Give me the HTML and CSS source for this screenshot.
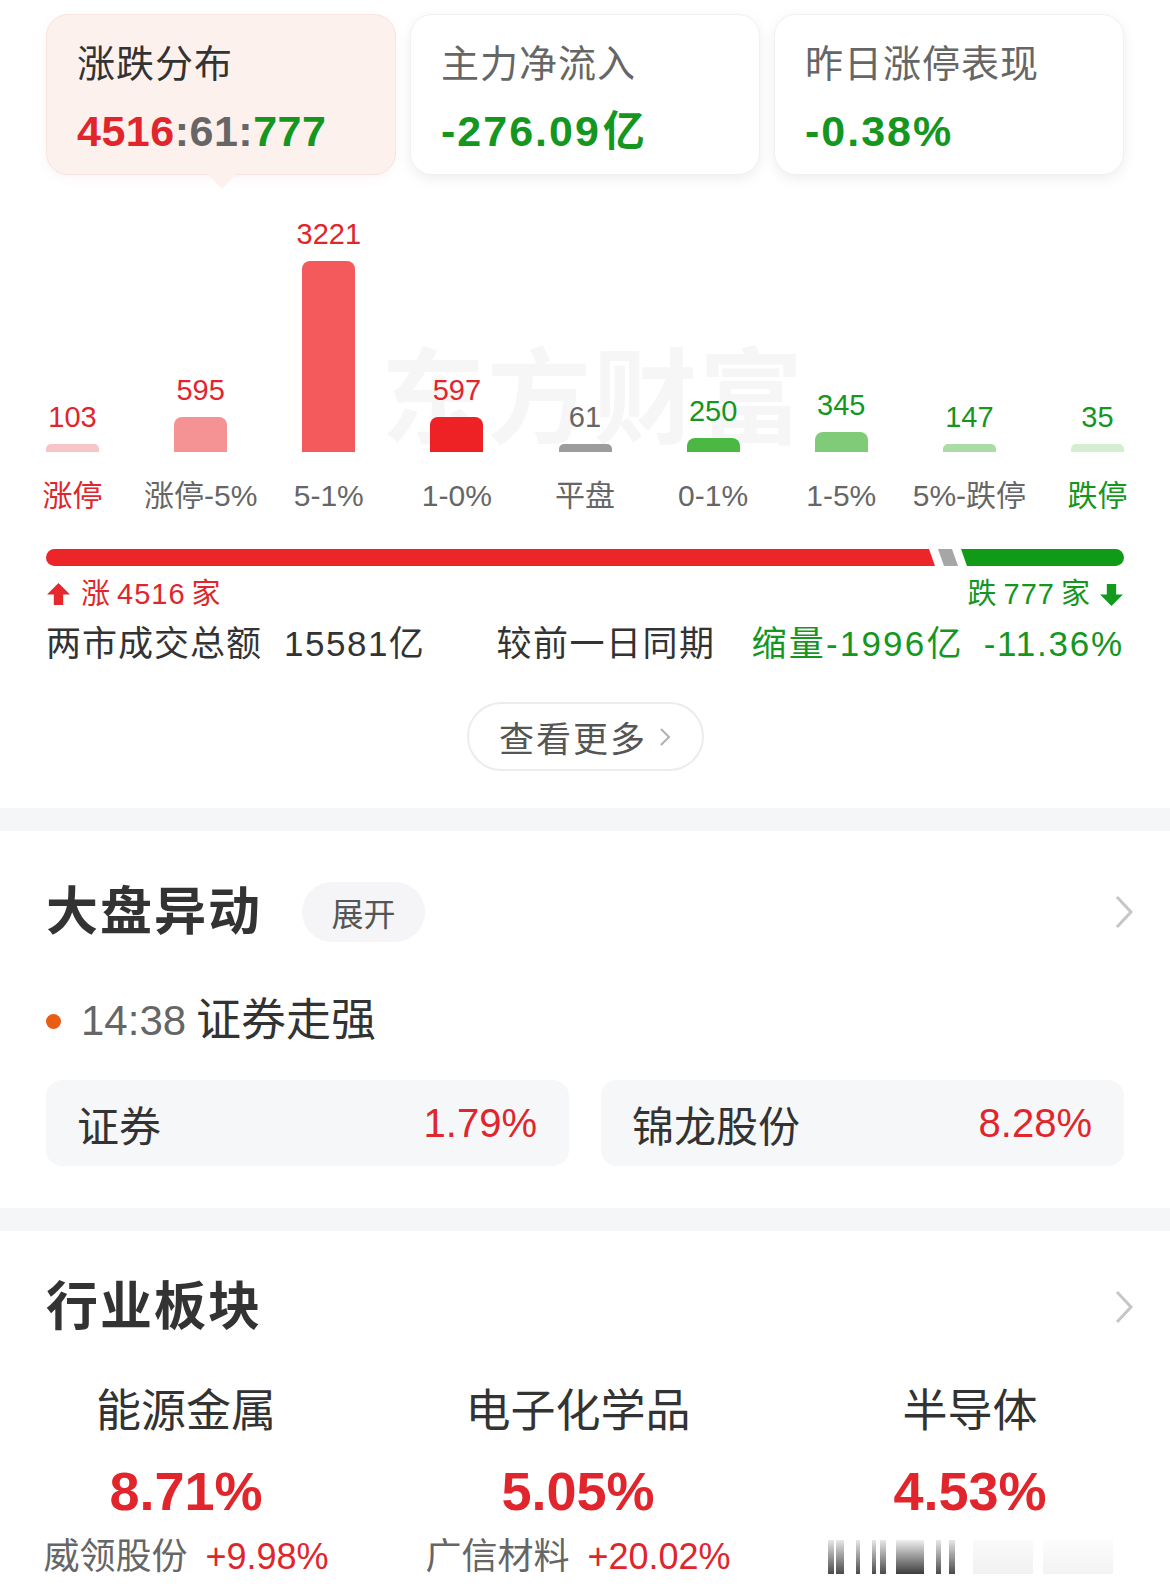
FILE: index.html
```html
<!DOCTYPE html>
<html lang="zh-CN">
<head>
<meta charset="utf-8">
<title>涨跌分布</title>
<link rel="stylesheet" href="styles.css">
</head>
<body>
<div class="page">
  <section class="top">
    <div class="cards">
      <div class="card active">
        <div class="card-title">涨跌分布</div>
        <div class="card-value"><span class="c-up">4516</span><span class="c-flat">:61:</span><span class="c-down">777</span></div>
        <span class="pointer"></span>
      </div>
      <div class="card">
        <div class="card-title muted">主力净流入</div>
        <div class="card-value wide c-down">-276.09<span class="unit">亿</span></div>
      </div>
      <div class="card">
        <div class="card-title muted">昨日涨停表现</div>
        <div class="card-value wide c-down">-0.38%</div>
      </div>
    </div>

    <div class="chart">
      <div class="watermark">东方财富</div>
      <div class="col"><div class="num c-up">103</div><div class="bar b1" style="height:8px"></div><div class="cat c-up">涨停</div></div>
      <div class="col"><div class="num c-up">595</div><div class="bar b2" style="height:35px"></div><div class="cat">涨停-5%</div></div>
      <div class="col"><div class="num c-up">3221</div><div class="bar b3" style="height:191px"></div><div class="cat">5-1%</div></div>
      <div class="col"><div class="num c-up">597</div><div class="bar b4" style="height:35px"></div><div class="cat">1-0%</div></div>
      <div class="col"><div class="num c-flat">61</div><div class="bar b5" style="height:8px"></div><div class="cat">平盘</div></div>
      <div class="col"><div class="num c-down">250</div><div class="bar b6" style="height:14px"></div><div class="cat">0-1%</div></div>
      <div class="col"><div class="num c-down">345</div><div class="bar b7" style="height:20px"></div><div class="cat">1-5%</div></div>
      <div class="col"><div class="num c-down">147</div><div class="bar b8" style="height:8px"></div><div class="cat">5%-跌停</div></div>
      <div class="col"><div class="num c-down">35</div><div class="bar b9" style="height:8px"></div><div class="cat c-down">跌停</div></div>
    </div>

    <div class="ratio">
      <div class="seg seg-up"></div>
      <div class="seg seg-flat"></div>
      <div class="seg seg-down"></div>
    </div>
    <div class="ratio-labels">
      <span class="rl c-up"><svg class="arr" viewBox="0 0 24 24" width="24" height="24"><path d="M12 1 L23 12 H16.5 V22 H7.5 V12 H1 Z" fill="#e6282d"/></svg>涨<span class="rn">4516</span>家</span>
      <span class="rl c-down">跌<span class="rn">777</span>家<svg class="arr" viewBox="0 0 24 24" width="24" height="24"><path d="M12 23 L23 12 H16.5 V2 H7.5 V12 H1 Z" fill="#129a1f"/></svg></span>
    </div>

    <div class="turnover">
      <span class="t-label">两市成交总额</span>
      <span class="t-val">15581亿</span>
      <span class="t-label t-cmp">较前一日同期</span>
      <span class="c-down t-chg">缩量-1996亿</span>
      <span class="c-down t-pct">-11.36%</span>
    </div>

    <div class="more-wrap">
      <div class="more">查看更多<svg viewBox="0 0 12 20" width="12" height="20"><path d="M2 2 L10 10 L2 18" fill="none" stroke="#b0b0b0" stroke-width="2"/></svg></div>
    </div>
  </section>

  <div class="divider"></div>

  <section class="sec">
    <div class="sec-head">
      <h2 class="sec-title">大盘异动</h2>
      <span class="pill">展开</span>
      <svg class="chev" viewBox="0 0 20 36" width="20" height="36"><path d="M3 3 L17 18 L3 33" fill="none" stroke="#c6c6c6" stroke-width="3"/></svg>
    </div>
    <div class="event">
      <span class="dot"></span>
      <span class="time">14:38</span>
      <span class="event-title">证券走强</span>
    </div>
    <div class="boxes">
      <div class="box"><span class="box-name">证券</span><span class="c-up">1.79%</span></div>
      <div class="box"><span class="box-name">锦龙股份</span><span class="c-up">8.28%</span></div>
    </div>
  </section>

  <div class="divider"></div>

  <section class="sec sec-ind">
    <div class="sec-head">
      <h2 class="sec-title">行业板块</h2>
      <svg class="chev" viewBox="0 0 20 36" width="20" height="36"><path d="M3 3 L17 18 L3 33" fill="none" stroke="#c6c6c6" stroke-width="3"/></svg>
    </div>
    <div class="industries">
      <div class="ind">
        <div class="ind-name">能源金属</div>
        <div class="ind-pct">8.71%</div>
        <div class="ind-lead">威领股份<span class="c-up">+9.98%</span></div>
      </div>
      <div class="ind">
        <div class="ind-name">电子化学品</div>
        <div class="ind-pct">5.05%</div>
        <div class="ind-lead">广信材料<span class="c-up">+20.02%</span></div>
      </div>
      <div class="ind">
        <div class="ind-name">半导体</div>
        <div class="ind-pct">4.53%</div>
        <div class="ind-lead glitch">
          <span class="g g1"></span><span class="g g2"></span><span class="g g3"></span><span class="g g4"></span><span class="g g5"></span><span class="g g6"></span><span class="g g7"></span><span class="g g8"></span><span class="g g9"></span><span class="g g10"></span>
        </div>
      </div>
    </div>
  </section>
</div>
</body>
</html>
```

FILE: styles.css
```css
* { box-sizing: border-box; }
html, body { margin: 0; padding: 0; background: #fff; }
body {
  font-family: "Liberation Sans", "Noto Sans CJK SC", sans-serif;
  color: #333;
}
.page { width: 1170px; overflow: hidden; }

.c-up { color: #e0262c; }
.c-down { color: #14961f; }
.c-flat { color: #666; }

.top { padding: 14px 46px 0; }

.cards { display: flex; gap: 14px; }
.card {
  position: relative;
  flex: 1;
  height: 161px;
  padding: 27px 30px 0;
  border-radius: 22px;
  background: #fff;
  border: 1px solid #f1f1f1;
  box-shadow: 0 4px 14px rgba(0,0,0,0.07);
}
.card.active { background: #fdf1ee; border-color: #f8e4e0; box-shadow: 0 3px 10px rgba(200,120,110,0.08); }
.card-title { font-size: 38px; line-height: 44px; color: #333; letter-spacing: 1px; }
.card-title.muted { color: #666; }
.card-value { margin-top: 19px; font-size: 43px; line-height: 52px; font-weight: bold; letter-spacing: 0.5px; }
.card-value.wide { letter-spacing: 2px; }
.card-value .unit { font-weight: bold; font-size: 42px; margin-left: 2px; }
.pointer {
  position: absolute;
  left: 161px;
  bottom: -15px;
  width: 0; height: 0;
  border-left: 14px solid transparent;
  border-right: 14px solid transparent;
  border-top: 15px solid #fdf1ee;
}

.chart {
  position: relative;
  margin-top: 42px;
  display: flex;
  justify-content: space-between;
  align-items: flex-end;
}
.watermark {
  position: absolute;
  left: 335px;
  top: 98px;
  font-size: 104px;
  font-weight: bold;
  letter-spacing: 2px;
  color: #f6f6f6;
  white-space: nowrap;
  font-family: "Noto Sans CJK SC", sans-serif;
  z-index: 0;
}
.col {
  position: relative;
  z-index: 1;
  width: 53px;
  display: flex;
  flex-direction: column;
  align-items: center;
}
.num { font-size: 29px; line-height: 34px; margin-bottom: 10px; white-space: nowrap; }
.bar { width: 53px; border-radius: 8px 8px 0 0; }
.b1 { background: #f9c4c5; border-radius: 5px 5px 0 0; }
.b2 { background: #f59394; }
.b3 { background: #f45a5b; }
.b4 { background: #ee2225; }
.b5 { background: #9c9c9c; border-radius: 5px 5px 0 0; }
.b6 { background: #4bb843; }
.b7 { background: #7fcb77; }
.b8 { background: #acdca6; border-radius: 5px 5px 0 0; }
.b9 { background: #d5eed2; border-radius: 5px 5px 0 0; }
.cat { margin-top: 24px; font-size: 30px; line-height: 40px; color: #666; white-space: nowrap; }
.cat.c-up { color: #e0262c; }
.cat.c-down { color: #14961f; }

.ratio { margin-top: 33px; display: flex; gap: 3px; height: 17px; }
.seg { height: 17px; }
.seg-up {
  width: 889px;
  background: #ec2528;
  border-radius: 9px 0 0 9px;
  clip-path: polygon(0 0, calc(100% - 6px) 0, 100% 100%, 0 100%);
}
.seg-flat {
  width: 20px;
  background: #a6a6a6;
  clip-path: polygon(0 0, calc(100% - 6px) 0, 100% 100%, 6px 100%);
}
.seg-down {
  flex: 1;
  background: #0f9a18;
  border-radius: 0 9px 9px 0;
  clip-path: polygon(0 0, 100% 0, 100% 100%, 6px 100%);
}

.ratio-labels { margin-top: 10px; display: flex; justify-content: space-between; height: 36px; }
.rl { display: flex; align-items: center; font-size: 29px; line-height: 36px; letter-spacing: 1px; }
.rn { margin: 0 6px; }
.rl .arr { width: 25px; height: 25px; }
.c-up .arr { margin-right: 10px; }
.c-down .arr { margin-left: 8px; }

.turnover { margin-top: 10px; display: flex; align-items: center; font-size: 35px; line-height: 44px; white-space: nowrap; }
.t-label { color: #333; letter-spacing: 1px; }
.t-val { margin-left: 22px; color: #333; letter-spacing: 1.5px; }
.t-cmp { margin-left: auto; letter-spacing: 1.5px; }
.t-chg { margin-left: 36px; letter-spacing: 2.2px; }
.t-pct { margin-left: 20px; letter-spacing: 1.8px; }

.more-wrap { display: flex; justify-content: center; margin-top: 36px; }
.more {
  width: 237px;
  height: 69px;
  border: 2px solid #ececec;
  border-radius: 35px;
  display: flex;
  align-items: center;
  justify-content: center;
  gap: 12px;
  font-size: 35px;
  color: #555;
  letter-spacing: 2px;
}

.divider { height: 23px; background: #f5f6f8; margin-top: 37px; }
.sec + .divider { margin-top: 42px; }

.sec { padding: 51px 46px 0; }
.sec-ind { padding-top: 46px; }
.sec-head { display: flex; align-items: center; height: 60px; }
.sec-title { margin: 0; font-size: 52px; line-height: 60px; font-weight: bold; color: #333; letter-spacing: 2px; }
.pill {
  margin-left: 40px;
  width: 123px;
  height: 60px;
  border-radius: 30px;
  background: #f5f5f7;
  display: flex;
  align-items: center;
  justify-content: center;
  font-size: 32px;
  color: #555;
}
.chev { margin-left: auto; margin-right: -10px; }

.event { margin-top: 54px; display: flex; align-items: center; height: 50px; font-size: 42px; line-height: 50px; }
.dot { width: 15px; height: 15px; border-radius: 50%; background: #e85c14; margin-right: 20px; }
.time { color: #666; }
.event-title { margin-left: 10px; color: #333; font-size: 45px; }

.boxes { margin-top: 34px; display: flex; gap: 32px; }
.box {
  flex: 1;
  height: 86px;
  border-radius: 16px;
  background: #f6f7f9;
  display: flex;
  align-items: center;
  justify-content: space-between;
  padding: 0 32px 0 31px;
  font-size: 40px;
  color: #333;
}
.box-name { font-size: 42px; }

.industries {
  margin: 47px 0 0 -56px;
  display: grid;
  grid-template-columns: repeat(3, 392px);
}
.ind { display: flex; flex-direction: column; align-items: center; }
.ind-name { font-size: 45px; line-height: 56px; color: #333; }
.ind-pct { margin-top: 19px; font-size: 54px; line-height: 64px; font-weight: bold; color: #e0262c; }
.ind-lead { margin-top: 12px; font-size: 36px; line-height: 44px; color: #666; white-space: nowrap; }
.ind-lead .c-up { margin-left: 18px; }

.glitch { display: flex; align-items: center; height: 44px; gap: 0; }
.g { display: inline-block; height: 34px; background: linear-gradient(to bottom, #e8e8e8, #4a4a4a); }
.g1 { width: 6px; margin-left: 0; }
.g2 { width: 8px; margin-left: 2px; }
.g3 { width: 4px; margin-left: 12px; }
.g4 { width: 4px; margin-left: 12px; }
.g5 { width: 6px; margin-left: 4px; }
.g6 { width: 28px; margin-left: 10px; background: linear-gradient(to bottom, #f0f0f0, #3c3c3c); }
.g7 { width: 5px; margin-left: 12px; }
.g8 { width: 6px; margin-left: 8px; }
.g9 { width: 60px; margin-left: 18px; background: linear-gradient(to bottom, #fafafa, #f1f1f1); }
.g10 { width: 70px; margin-left: 10px; background: linear-gradient(to bottom, #fcfcfc, #f3f3f3); }
```
